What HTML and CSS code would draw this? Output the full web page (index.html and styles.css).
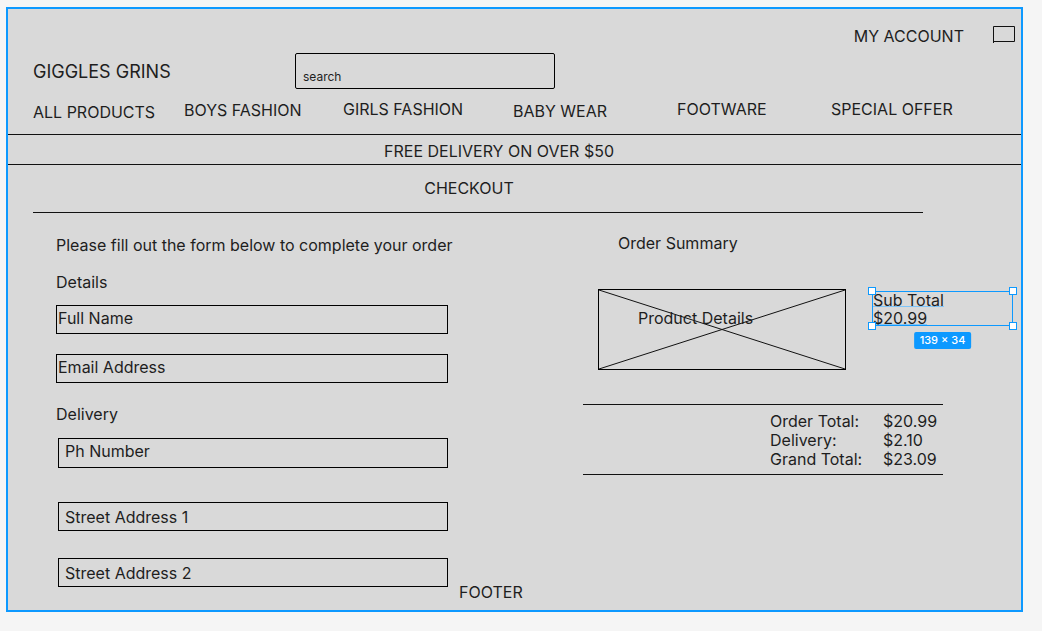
FILE: index.html
```html
<!DOCTYPE html>
<html lang="en">
<head>
    <meta charset="UTF-8">
    <meta name="viewport" content="width=device-width, initial-scale=1.0">
    <title>Giggles Grins - Checkout</title>
    <link rel="stylesheet" href="styles.css">
</head>
<body>
    <div class="frame">
        <header class="header">
            <div class="top-bar">
                <span class="account">MY ACCOUNT</span>
                <svg class="cart" width="22" height="17" viewBox="0 0 22 17">
                    <path d="M0.5 17V0.5H21.5V15.5H0.5" fill="none" stroke="#111" stroke-width="1"/>
                </svg>
            </div>
            <div class="brand-row">
                <div class="logo">GIGGLES GRINS</div>
                <div class="search">search</div>
            </div>
            <nav class="nav">
                <a class="nav-item drop-3">ALL PRODUCTS</a>
                <a class="nav-item drop-1">BOYS FASHION</a>
                <a class="nav-item">GIRLS FASHION</a>
                <a class="nav-item drop-2">BABY WEAR</a>
                <a class="nav-item">FOOTWARE</a>
                <a class="nav-item">SPECIAL OFFER</a>
            </nav>
        </header>

        <div class="banner">FREE DELIVERY ON OVER $50</div>
        <h1 class="checkout-head">CHECKOUT</h1>

        <main class="checkout-body">
            <section class="form-col">
                <p class="intro">Please fill out the form below to complete your order</p>
                <h2 class="label label-details">Details</h2>
                <div class="field full-name">Full Name</div>
                <div class="field email">Email Address</div>
                <h2 class="label label-delivery">Delivery</h2>
                <div class="field inset phone">Ph Number</div>
                <div class="field inset street street-1">Street Address 1</div>
                <div class="field inset street street-2">Street Address 2</div>
            </section>

            <section class="summary-col">
                <h2 class="summary-title">Order Summary</h2>
                <div class="item-row">
                    <div class="product">
                        <svg class="product-x" viewBox="0 0 100 100" preserveAspectRatio="none">
                            <line x1="0" y1="0" x2="100" y2="100" stroke="#111" stroke-width="1" vector-effect="non-scaling-stroke"/>
                            <line x1="0" y1="100" x2="100" y2="0" stroke="#111" stroke-width="1" vector-effect="non-scaling-stroke"/>
                        </svg>
                        <span class="product-label">Product Details</span>
                    </div>
                    <div class="subtotal">
                        <span class="hover-line">Sub Total</span><br>
                        <span class="hover-line">$20.99</span>
                        <div class="selection">
                            <i class="handle tl"></i>
                            <i class="handle tr"></i>
                            <i class="handle bl"></i>
                            <i class="handle br"></i>
                            <span class="size-badge">139 × 34</span>
                        </div>
                    </div>
                </div>
                <div class="totals">
                    <span>Order Total:</span><span>$20.99</span>
                    <span>Delivery:</span><span>$2.10</span>
                    <span>Grand Total:</span><span>$23.09</span>
                </div>
            </section>
        </main>

        <footer class="footer">FOOTER</footer>
    </div>
</body>
</html>
```

FILE: styles.css
```css
body {
    margin: 0;
    background: #f5f5f5;
    font-family: "Inter", "Liberation Sans", sans-serif;
    font-size: 16px;
    line-height: 19px;
    color: #1e1e1e;
}
h1, h2, p {
    margin: 0;
    font-size: 16px;
    font-weight: normal;
}
.frame {
    margin: 7px 0 0 6px;
    width: 1017px;
    height: 605px;
    box-sizing: border-box;
    border: 2px solid #0d99ff;
    background: #d9d9d9;
}

/* header */
.top-bar {
    display: flex;
    justify-content: flex-end;
    align-items: flex-start;
    padding: 18px 6px 0 0;
}
.account { margin-right: 29px; }
.cart {
    display: block;
    margin-top: -1px;
}
.brand-row {
    display: flex;
    align-items: center;
    margin-top: 7px;
    padding-left: 25px;
    height: 36px;
}
.logo {
    width: 262px;
    font-size: 18px;
    line-height: 22px;
    padding-top: 2px;
}
.search {
    width: 260px;
    height: 36px;
    box-sizing: border-box;
    border: 1px solid #000;
    border-radius: 2px;
    padding: 15px 0 0 7px;
    font-size: 12px;
    line-height: 15px;
}
.nav {
    display: grid;
    grid-template-columns: 151px 159px 170px 164px 154px auto;
    align-items: start;
    margin-top: 11px;
    padding-left: 25px;
    height: 34px;
    box-sizing: border-box;
    white-space: nowrap;
}
.nav-item { display: block; }
.drop-1 { padding-top: 1px; }
.drop-2 { padding-top: 2px; }
.drop-3 { padding-top: 3px; }

.banner {
    border-top: 1px solid #111;
    border-bottom: 1px solid #111;
    padding: 7px 31px 3px 0;
    text-align: center;
}
.checkout-head {
    width: 890px;
    box-sizing: border-box;
    margin-left: 25px;
    padding: 14px 18px 14px 0;
    border-bottom: 1px solid #111;
    text-align: center;
}

/* body */
.checkout-body {
    display: flex;
    align-items: flex-start;
}
.form-col {
    width: 392px;
    margin-left: 48px;
    padding-top: 23px;
}
.intro { white-space: nowrap; }
.label-details { margin-top: 18px; }
.label-delivery { margin-top: 22px; }
.field {
    box-sizing: border-box;
    height: 29px;
    border: 1px solid #000;
    padding: 3px 0 0 1px;
}
.full-name { margin-top: 13px; }
.email { margin-top: 20px; }
.field.inset {
    margin-left: 2px;
    padding-left: 6px;
}
.phone {
    margin-top: 14px;
    height: 30px;
}
.street { padding-top: 5px; }
.street-1 { margin-top: 34px; }
.street-2 { margin-top: 27px; }

.summary-col {
    flex: 1;
    margin-left: 135px;
    padding-top: 21px;
}
.summary-title { margin-left: 35px; }
.item-row {
    display: flex;
    align-items: flex-start;
    margin-top: 36px;
    margin-left: 15px;
}
.product {
    position: relative;
    flex: none;
    width: 248px;
    height: 81px;
    box-sizing: border-box;
    border: 1px solid #000;
    padding: 19px 0 0 39px;
}
.product-x {
    position: absolute;
    top: 0;
    left: 0;
    width: 100%;
    height: 100%;
}
.product-label { position: relative; }
.subtotal {
    position: relative;
    flex: none;
    margin: 2px 0 0 27px;
    line-height: 18.4px;
    white-space: nowrap;
}
.hover-line {
    text-decoration: underline;
    text-decoration-color: #7fc4f8;
    text-decoration-thickness: 1px;
    text-underline-offset: 0;
    text-decoration-skip-ink: none;
}
.selection {
    position: absolute;
    top: 0;
    left: -1px;
    width: 141px;
    height: 35px;
    box-sizing: border-box;
    border: 1px solid #0d99ff;
}
.handle {
    position: absolute;
    width: 8px;
    height: 8px;
    box-sizing: border-box;
    background: #fff;
    border: 1px solid #0d99ff;
}
.handle.tl { top: -5px; left: -5px; }
.handle.tr { top: -5px; right: -5px; }
.handle.bl { bottom: -5px; left: -5px; }
.handle.br { bottom: -5px; right: -5px; }
.size-badge {
    position: absolute;
    top: calc(100% + 7px);
    left: 50%;
    transform: translateX(-50%);
    background: #0d99ff;
    color: #fff;
    border-radius: 2px;
    font-size: 11px;
    font-weight: 500;
    line-height: 17px;
    padding: 0 6px;
    white-space: nowrap;
}

.totals {
    display: grid;
    grid-template-columns: 113px auto;
    width: 360px;
    box-sizing: border-box;
    margin-top: 34px;
    padding: 7px 0 5px 187px;
    border-top: 1px solid #111;
    border-bottom: 1px solid #111;
}

.footer {
    margin-top: -4px;
    padding-left: 451px;
}
```
